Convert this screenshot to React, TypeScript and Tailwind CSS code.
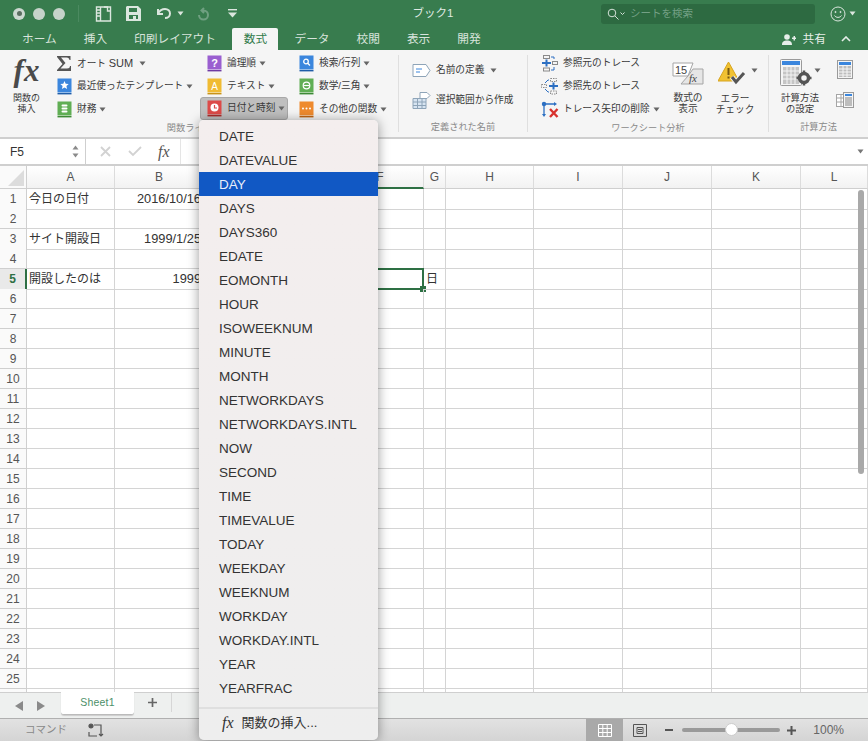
import type { ReactNode } from "react";

const tabs = ["ホーム", "挿入", "印刷レイアウト", "数式", "データ", "校閲", "表示", "開発"];

const menuItems = [
  "DATE", "DATEVALUE", "DAY", "DAYS", "DAYS360", "EDATE", "EOMONTH", "HOUR", "ISOWEEKNUM", "MINUTE",
  "MONTH", "NETWORKDAYS", "NETWORKDAYS.INTL", "NOW", "SECOND", "TIME", "TIMEVALUE", "TODAY", "WEEKDAY",
  "WEEKNUM", "WORKDAY", "WORKDAY.INTL", "YEAR", "YEARFRAC",
];

const columns = ["A", "B", "C", "D", "E", "F", "G", "H", "I", "J", "K", "L"];
const rows = Array.from({ length: 26 }, (_, i) => i + 1);
const gridCols = "grid grid-cols-[27px_88px_89px_44px_44px_45px_87px_22px_88px_89px_89px_89px_67px]";

const cells: Record<string, { text: string; right?: boolean }> = {
  A1: { text: "今日の日付" },
  B1: { text: "2016/10/16", right: true },
  A3: { text: "サイト開設日" },
  B3: { text: "1999/1/25", right: true },
  A5: { text: "開設したのは" },
  B5: { text: "1999", right: true },
  G5: { text: "日" },
};

const Caret = ({ className = "" }: { className?: string }) => (
  <svg width="7" height="5" viewBox="0 0 7 5" className={className}>
    <path d="M0.5 0.5h6L3.5 4.5z" fill="currentColor" />
  </svg>
);

const BookIcon = ({ color, line, children }: { color: string; line: string; children: ReactNode }) => (
  <svg width="15" height="17" viewBox="0 0 15 17" className="shrink-0">
    <rect x="0.5" y="0.5" width="14" height="14" fill={color} />
    <rect x="0.5" y="15" width="14" height="1.4" fill={line} />
    {children}
  </svg>
);

const FxText = ({ className }: { className: string }) => (
  <span className={`font-['Liberation_Serif',serif] italic ${className}`}>fx</span>
);

const RibbonItem = ({ icon, label, caret = true, width }: { icon: ReactNode; label: ReactNode; caret?: boolean; width?: string }) => (
  <div className={`flex h-[23px] items-center ${width ?? ""}`}>
    <div className="flex w-[20px] shrink-0 items-center">{icon}</div>
    <span className="whitespace-nowrap text-[9.7px] text-[#3a3a3a]">{label}</span>
    {caret && <Caret className="ml-[3px] text-[#666]" />}
  </div>
);

const GroupLabel = ({ children }: { children: ReactNode }) => (
  <div className="mt-auto pb-[3px] text-center text-[9.2px] leading-[14px] text-[#8a8a8a]">{children}</div>
);

const GroupDivider = () => <div className="mb-[5px] mt-[3px] w-px shrink-0 bg-[#dfdfdf]" />;

const TitleBar = () => (
  <div className="flex h-[27px] shrink-0 items-center bg-[#387c4e] pl-[13px] text-[#cfdcd3]">
    <div className="flex items-center gap-[8px]">
      <div className="flex h-[12px] w-[12px] items-center justify-center rounded-full bg-[#cdd8d1]">
        <div className="h-[5px] w-[5px] rounded-full bg-[#5b6d61]" />
      </div>
      <div className="h-[12px] w-[12px] rounded-full bg-[#c6d3ca]" />
      <div className="h-[12px] w-[12px] rounded-full bg-[#c6d3ca]" />
    </div>
    <div className="ml-[13px] h-[17px] w-px bg-[#4b8a60]" />
    <svg width="17" height="16" viewBox="0 0 17 16" className="ml-[16px]" fill="none" stroke="#dbe6de" strokeWidth="1.4">
      <path d="M1.5 1h14v14h-14z" />
      <path d="M5.5 1v14M1.5 4h4M1.5 7h4M1.5 10h4M9 1h3.5v4h3" />
    </svg>
    <svg width="15" height="15" viewBox="0 0 15 15" className="ml-[14px]" fill="#dbe6de">
      <path d="M1 0h11l3 3v12H0V1zM3 2v4h8V2zM3 9v4h9V9z" fillRule="evenodd" />
      <rect x="7" y="10" width="3" height="3" />
    </svg>
    <svg width="16" height="13" viewBox="0 0 16 13" className="ml-[15px]" fill="none" stroke="#dbe6de" strokeWidth="2">
      <path d="M2 2v5h5M2 6.5C4 3 6.5 2 9 2c3 0 5 2 5 4.5S12 11 9 11" />
    </svg>
    <Caret className="ml-[5px] text-[#dbe6de]" />
    <svg width="12" height="14" viewBox="0 0 12 14" className="ml-[13px]" fill="none" stroke="#6fa081" strokeWidth="2">
      <path d="M7 1 4.500 3.500 7 6M5 3.500h1.500a4.500 4.500 0 1 1-4.500 4.500" />
    </svg>
    <svg width="9" height="9" viewBox="0 0 9 9" className="ml-[19px]" fill="#dbe6de">
      <rect x="0" y="0" width="9" height="1.4" />
      <path d="M0 3.5h9L4.500 8.500z" />
    </svg>
    <div className="ml-[171px] w-[50px] text-center text-[11.5px] text-[#dfe9e2]">ブック1</div>
    <div className="ml-[143px] flex h-[20px] w-[214px] items-center rounded-[3px] bg-[#2d6a41] pl-[6px]">
      <svg width="12" height="12" viewBox="0 0 12 12" fill="none" stroke="#d5e2d9" strokeWidth="1">
        <circle cx="5" cy="5" r="3.8" />
        <path d="m8 8 3.5 3.5" />
      </svg>
      <svg width="5" height="4" viewBox="0 0 5 4" className="ml-[1px]" fill="none" stroke="#d5e2d9">
        <path d="m0.5 0.5 2 2 2-2" />
      </svg>
      <span className="ml-[5px] text-[10.5px] text-[#74a085]">シートを検索</span>
    </div>
    <svg width="16" height="16" viewBox="0 0 16 16" className="ml-[15px]" fill="none" stroke="#dbe6de" strokeWidth="1">
      <circle cx="8" cy="8" r="7" />
      <circle cx="5.5" cy="6" r="0.6" fill="#dbe6de" />
      <circle cx="10.5" cy="6" r="0.6" fill="#dbe6de" />
      <path d="M4.5 9.5c1.5 2.5 5.5 2.5 7 0" />
    </svg>
    <Caret className="ml-[3px] text-[#dbe6de]" />
  </div>
);

const TabBar = () => (
  <div className="flex h-[23px] shrink-0 items-end bg-[#387c4e] pl-[8.5px] text-[11.7px] text-[#d8e4dc]">
    {tabs.map((tab) =>
      tab === "数式" ? (
        <div key={tab} className="ml-[3px] mr-[2.5px] flex h-[22px] w-[46px] items-center justify-center rounded-t-[2px] bg-[#f5f5f5] text-[#2f7a49]">
          {tab}
        </div>
      ) : (
        <div key={tab} className="flex h-[22px] items-center whitespace-nowrap px-[13.5px]">
          {tab}
        </div>
      ),
    )}
    <div className="ml-auto flex h-[22px] items-center pr-[17px]">
      <svg width="14" height="11" viewBox="0 0 14 11" fill="#e6eee9">
        <circle cx="5" cy="3" r="2.8" />
        <path d="M0 11c0-3.5 2-4.5 5-4.5s5 1 5 4.500zM10 3.500h1.500V2H13v1.500h1V5h-1v1.500h-1.500V5H10z" />
      </svg>
      <span className="ml-[7px] text-[#e6eee9]">共有</span>
      <svg width="10" height="6" viewBox="0 0 10 6" className="ml-[15px]" fill="none" stroke="#e6eee9" strokeWidth="1.6">
        <path d="m1 5 4-4 4 4" />
      </svg>
    </div>
  </div>
);

const Ribbon = () => (
  <div className="flex h-[87px] shrink-0 bg-[#f5f5f5] pt-[2px]">
    <div className="flex w-[398px] flex-col">
      <div className="flex">
        <div className="flex w-[53px] flex-col items-center">
          <FxText className="text-[31px] font-bold leading-[38px] text-[#4a4a4a]" />
          <div className="mt-[3px] text-center text-[9px] leading-[11px] text-[#3a3a3a]">
            関数の
            <br />
            挿入
          </div>
        </div>
        <div className="ml-[4px] flex w-[150px] flex-col">
          <RibbonItem
            label={
              <span className="mr-[3px]">
                オート <span className="text-[11px]">SUM</span>
              </span>
            }
            icon={
              <svg width="14" height="15" viewBox="0 0 14 15" fill="#555">
                <path d="M0 0h13.500v4h-1c-.3-1.600-1-2.500-3-2.500H4L8.500 7 3.500 12.500H10c2 0 2.800-.8 3-2.500h1v5H0v-1L5.500 8 0 1z" />
              </svg>
            }
          />
          <RibbonItem
            label="最近使ったテンプレート"
            icon={
              <BookIcon color="#3b86dd" line="#1f5da8">
                <path d="m7.500 3 1.200 2.800 3 .2-2.300 2 .7 3-2.600-1.600L4.900 11l.7-3-2.300-2 3-.2z" fill="#fff" />
              </BookIcon>
            }
          />
          <RibbonItem
            label="財務"
            icon={
              <BookIcon color="#60ae54" line="#3d8a35">
                <rect x="4.500" y="3.500" width="6" height="2" rx="1" fill="#fff" />
                <rect x="4.500" y="6.500" width="6" height="2" rx="1" fill="#fff" />
                <rect x="4.500" y="9.500" width="6" height="2" rx="1" fill="#fff" />
              </BookIcon>
            }
          />
        </div>
        <div className="flex w-[92px] flex-col">
          <RibbonItem
            label="論理順"
            icon={
              <BookIcon color="#9a5fd0" line="#6e3ba3">
                <text x="7.500" y="11.500" textAnchor="middle" fontSize="11" fontWeight="700" fill="#fff">?</text>
              </BookIcon>
            }
          />
          <RibbonItem
            label="テキスト"
            icon={
              <BookIcon color="#f0bb33" line="#c99317">
                <text x="7.500" y="11.500" textAnchor="middle" fontSize="10" fill="#fff">A</text>
              </BookIcon>
            }
          />
          <div className="-ml-[7px] -mt-px w-[88px] rounded-[3px] border border-[#a8a8a8] bg-[#bfbfbf] pl-[6px]">
            <div className="-my-px">
              <RibbonItem
                label="日付と時刻"
                icon={
                  <BookIcon color="#dc4a48" line="#a82b2a">
                    <circle cx="7.500" cy="7.500" r="4" fill="#fff" />
                    <path d="M7.500 5v3h2.500" fill="none" stroke="#dc4a48" strokeWidth="1.200" />
                  </BookIcon>
                }
              />
            </div>
          </div>
        </div>
        <div className="flex flex-col">
          <RibbonItem
            label="検索/行列"
            icon={
              <BookIcon color="#3b86dd" line="#1f5da8">
                <circle cx="7" cy="6.500" r="2.300" fill="none" stroke="#fff" strokeWidth="1.300" />
                <path d="m8.700 8.200 2.300 2.300" stroke="#fff" strokeWidth="1.300" />
              </BookIcon>
            }
          />
          <RibbonItem
            label="数学/三角"
            icon={
              <BookIcon color="#60ae54" line="#3d8a35">
                <circle cx="7.500" cy="7.500" r="3.300" fill="none" stroke="#fff" strokeWidth="1.200" />
                <path d="M4.500 7.500h6" stroke="#fff" strokeWidth="1.200" />
              </BookIcon>
            }
          />
          <RibbonItem
            label="その他の関数"
            icon={
              <BookIcon color="#ee8a2e" line="#bf6412">
                <circle cx="4" cy="7.500" r="1" fill="#fff" />
                <circle cx="7.500" cy="7.500" r="1" fill="#fff" />
                <circle cx="11" cy="7.500" r="1" fill="#fff" />
              </BookIcon>
            }
          />
        </div>
      </div>
      <GroupLabel>関数ライブラリ</GroupLabel>
    </div>
    <GroupDivider />

    <div className="flex w-[128px] flex-col">
      <div className="ml-[13px] mt-[7px] flex h-[23px] items-center">
        <svg width="19" height="13" viewBox="0 0 19 13" className="mr-[5px]" fill="#fff" stroke="#8ea4b8">
          <path d="M1 .5h13l4 6-4 6H1z" />
          <path d="M4 5h6M4 8h4" stroke="#3b86dd" />
        </svg>
        <span className="text-[9.7px] text-[#3a3a3a]">名前の定義</span>
        <Caret className="ml-[6px] text-[#666]" />
      </div>
      <div className="ml-[13px] mt-[7px] flex h-[23px] items-center">
        <svg width="19" height="18" viewBox="0 0 19 18" className="mr-[5px]" fill="#d7e4f1" stroke="#8ea4b8">
          <path d="M1 6.500h13v10H1zM1 10h13M1 13.500h13M5.500 6.500v10M10 6.500v10" />
          <path d="M8 .5h7l3 3-3 3H8z" fill="#fff" />
        </svg>
        <span className="whitespace-nowrap text-[9.7px] text-[#3a3a3a]">選択範囲から作成</span>
      </div>
      <GroupLabel>定義された名前</GroupLabel>
    </div>
    <GroupDivider />

    <div className="flex w-[240px] flex-col">
      <div className="flex">
        <div className="ml-[13px] flex w-[124px] flex-col">
          <RibbonItem
            label="参照元のトレース"
            caret={false}
            width="[&>div]:w-[22px]"
            icon={
              <svg width="17" height="17" viewBox="0 0 17 17" fill="none" stroke="#8a8a8a">
                <rect x="2.500" y="0.500" width="6" height="3" />
                <rect x="2.500" y="13" width="6" height="3" />
                <rect x="11.500" y="6.500" width="5" height="3" />
                <path d="M1 8h9M5.500 4.500v7" stroke="#2c6fc2" strokeWidth="2" />
                <path d="M10 2h3v2M10 15h3v-3" stroke="#2c6fc2" />
              </svg>
            }
          />
          <RibbonItem
            label="参照先のトレース"
            caret={false}
            width="[&>div]:w-[22px]"
            icon={
              <svg width="17" height="17" viewBox="0 0 17 17" fill="none" stroke="#8a8a8a">
                <rect x="9.500" y="0.500" width="6" height="3" strokeDasharray="1.500 1" />
                <rect x="9.500" y="13" width="6" height="3" strokeDasharray="1.500 1" />
                <rect x="0.500" y="6.500" width="5" height="3" strokeDasharray="1.500 1" />
                <path d="M8 8h9M12.500 4.500v7" stroke="#2c6fc2" strokeWidth="2" />
                <path d="M4 5l3-3h1M4 11l3 3h1" stroke="#2c6fc2" />
              </svg>
            }
          />
          <RibbonItem
            label="トレース矢印の削除"
            width="[&>div]:w-[22px]"
            icon={
              <svg width="18" height="17" viewBox="0 0 18 17" fill="none">
                <path d="M3 3v11M3 3h11" stroke="#2c6fc2" strokeWidth="1.300" />
                <circle cx="3" cy="3" r="2.200" fill="#2c6fc2" />
                <path d="M1 13l2 3 2-3zM13 1l3 2-3 2z" fill="#2c6fc2" />
                <path d="m9 8 7.500 8m0-8L9 16" stroke="#d8322e" strokeWidth="2.400" />
              </svg>
            }
          />
        </div>
        <div className="flex w-[46px] flex-col items-center">
          <svg width="32" height="24" viewBox="0 0 32 24" className="mt-[10px]">
            <path d="M1 1h20l-5 13H1z" fill="#fff" stroke="#a5a5a5" />
            <path d="M21 7h10v15H9l7-8z" fill="#e6e6e6" stroke="#a5a5a5" />
            <text x="3" y="11.500" fontSize="11" fill="#444">15</text>
            <text x="17" y="20" fontSize="11" fontStyle="italic" fontFamily="Liberation Serif" fill="#444">fx</text>
          </svg>
          <div className="mt-[6px] text-center text-[9.700px] leading-[11px] text-[#3a3a3a]">
            数式の
            <br />
            表示
          </div>
        </div>
        <div className="flex w-[48px] flex-col items-center">
          <div className="mt-[9px] flex items-center pl-[6px]">
            <svg width="28" height="24" viewBox="0 0 28 24">
              <path d="M10.500 1 21 20H0z" fill="#f1c232" stroke="#d7a41e" strokeLinejoin="round" />
              <path d="M9.500 7h2v7h-2zM9.500 15.500h2v2h-2z" fill="#7a5a10" />
              <path d="m14 16 4 5 8-9" fill="none" stroke="#f5f5f5" strokeWidth="5" />
              <path d="m14 16 4 5 8-9" fill="none" stroke="#555" strokeWidth="3" />
            </svg>
            <Caret className="ml-[5px] mb-[6px] text-[#666]" />
          </div>
          <div className="mt-[8px] text-center text-[9.700px] leading-[11px] text-[#3a3a3a]">
            エラー
            <br />
            チェック
          </div>
        </div>
      </div>
      <GroupLabel>ワークシート分析</GroupLabel>
    </div>
    <GroupDivider />

    <div className="flex flex-1 flex-col">
      <div className="flex">
        <div className="flex w-[62px] flex-col items-center">
          <div className="mt-[7px] flex items-center">
            <svg width="33" height="28" viewBox="0 0 33 28">
              <rect x="0.500" y="0.500" width="21" height="26" rx="1" fill="#f5f5f5" stroke="#9a9a9a" />
              <rect x="2" y="2" width="18" height="4" fill="#3b86dd" />
              <path d="M3 8h16v17H3z" fill="#c5c5c5" />
              <path d="M3 12h16M3 16h16M3 20h16M7 8v17M11 8v17M15 8v17" stroke="#f5f5f5" />
              <circle cx="24" cy="19" r="4.500" fill="#f5f5f5" stroke="#555" strokeWidth="3.500" />
              <path d="M24 11.500v3M24 23.500v3M16.500 19h3M28.500 19h3" stroke="#555" strokeWidth="2.500" />
            </svg>
            <Caret className="ml-px mb-[6px] text-[#666]" />
          </div>
          <div className="mt-[5px] text-center text-[9.500px] leading-[11px] text-[#3a3a3a]">
            計算方法
            <br />
            の設定
          </div>
        </div>
        <div className="flex flex-col items-center pl-[5px]">
          <svg width="17" height="19" viewBox="0 0 17 19" className="mt-[8px]">
            <rect x="0.500" y="0.500" width="15" height="18" fill="#f5f5f5" stroke="#9a9a9a" />
            <rect x="2" y="2" width="12" height="3" fill="#3b86dd" />
            <path d="M2 6h12v11H2z" fill="#bdbdbd" />
            <path d="M2 9h12M2 12h12M2 15h12M6 6v11M10 6v11" stroke="#f5f5f5" />
          </svg>
          <svg width="18" height="17" viewBox="0 0 18 17" className="mt-[13px]">
            <rect x="0.500" y="2.500" width="10" height="12" fill="#fff" stroke="#a5a5a5" />
            <path d="M1 6h9M1 10h9M5 3v11" stroke="#a5a5a5" />
            <rect x="7.500" y="0.500" width="10" height="15" fill="#f5f5f5" stroke="#9a9a9a" />
            <rect x="9" y="2" width="7" height="2" fill="#3b86dd" />
            <path d="M9 5h7v9H9z" fill="#bdbdbd" />
          </svg>
        </div>
      </div>
      <GroupLabel>計算方法</GroupLabel>
    </div>
  </div>
);

const FormulaBar = () => (
  <div className="flex h-[29px] shrink-0 border-y-2 border-[#cfcfcf] bg-white">
    <div className="flex w-[86px] items-center border-r border-[#cfcfcf] pl-[10px] text-[12px] text-[#333]">
      F5
      <div className="ml-auto mr-[6px] flex flex-col gap-[3px] text-[#8a8a8a]">
        <Caret className="rotate-180" />
        <Caret />
      </div>
    </div>
    <div className="flex w-[95px] items-center border-r border-[#e5e5e5] pl-[14px]">
      <svg width="11" height="11" viewBox="0 0 11 11" stroke="#d2d2d2" strokeWidth="1.800">
        <path d="m1 1 9 9m0-9-9 9" />
      </svg>
      <svg width="14" height="11" viewBox="0 0 14 11" className="ml-[17px]" fill="none" stroke="#d2d2d2" strokeWidth="1.800">
        <path d="m1 5 4 4 8-8" />
      </svg>
      <FxText className="ml-[16px] text-[16px] leading-[20px] text-[#555]" />
    </div>
    <div className="ml-auto flex items-center pr-[4px] text-[#777]">
      <Caret />
    </div>
  </div>
);

const SheetGrid = () => (
  <div className="relative min-h-0 flex-1 overflow-hidden bg-white text-[12px] text-[#333]">
    <div className={`${gridCols} h-[23px]`}>
      <div className="relative border-r border-b border-[#cfcfcf] bg-[#fafafa]">
        <svg width="16" height="16" viewBox="0 0 16 16" className="absolute bottom-[2px] right-[2px]">
          <path d="M16 0v16H0z" fill="#dcdcdc" />
        </svg>
      </div>
      {columns.map((col) => (
        <div
          key={col}
          className={`flex items-center justify-center border-r border-[#dcdcdc] bg-gradient-to-b from-white to-[#f2f2f2] text-[#555] ${
            col === "F" ? "border-b-2 border-b-[#2e7044]" : "border-b border-b-[#cfcfcf]"
          }`}
        >
          {col}
        </div>
      ))}
    </div>
    {rows.map((row) => (
      <div key={row} className={`${gridCols} h-[20px]`}>
        <div
          className={`flex items-center justify-center border-r border-b border-[#cfcfcf] ${
            row === 5 ? "border-r-2 border-r-[#2e7044] bg-[#e9e9e9] font-bold text-[#2e7044]" : "bg-[#fafafa] text-[#555]"
          }`}
        >
          {row <= 25 ? row : ""}
        </div>
        {columns.map((col) => {
          const cell = cells[`${col}${row}`];
          const selected = col === "F" && row === 5;
          return (
            <div
              key={col}
              className={`relative whitespace-nowrap border-r border-b border-[#d4d4d4] px-[2px] leading-[20px] ${
                cell?.right ? "flex justify-end text-[12.800px]" : ""
              }`}
            >
              {cell?.text}
              {selected && (
                <>
                  <div className="absolute -top-px -bottom-px -left-px -right-px border-2 border-[#2e7044]" />
                  <div className="absolute -bottom-[3px] -right-[3px] h-[6px] w-[6px] bg-[#2e7044]" />
                </>
              )}
            </div>
          );
        })}
      </div>
    ))}
    <div className="absolute right-[4px] top-[24px] h-[284px] w-[6px] rounded-full bg-[#a9a9a9]" />
  </div>
);

const SheetTabs = () => (
  <div className="flex h-[26px] shrink-0 border-t border-[#cfcfcf] bg-[#eef0ef]">
    <div className="flex w-[61px] items-center pl-[15px] text-[#8a8a8a]">
      <svg width="8" height="10" viewBox="0 0 8 10" fill="currentColor">
        <path d="M8 0v10L0 5z" />
      </svg>
      <svg width="8" height="10" viewBox="0 0 8 10" className="ml-[14px]" fill="currentColor">
        <path d="M0 0v10l8-5z" />
      </svg>
    </div>
    <div className="-mt-px mb-[3px] flex w-[73px] items-center justify-center rounded-b-[3px] border-b border-[#bbb] bg-white text-[10.5px] tracking-[0.2px] text-[#4c9069] shadow-[0_1px_1px_#ccc]">
      Sheet1
    </div>
    <div className="mb-[6px] flex w-[38px] items-center justify-center border-r border-[#d6d6d6]">
      <svg width="11" height="11" viewBox="0 0 11 11" stroke="#666" strokeWidth="1.700">
        <path d="M5.500 1v9M1 5.500h9" />
      </svg>
    </div>
  </div>
);

const StatusBar = () => (
  <div className="flex h-[23px] shrink-0 items-center border-t border-[#b0b0b0] bg-gradient-to-b from-[#e2e2e2] to-[#d4d4d4] pl-[25px] text-[#888]">
    <span className="text-[10.5px]">コマンド</span>
    <svg width="16" height="15" viewBox="0 0 16 15" className="ml-[21px]" fill="none" stroke="#555" strokeWidth="1.200">
      <circle cx="3" cy="3" r="2" fill="#555" />
      <path d="M6 2h7v11M1 9v4h8M11 11l2 2 2-2" />
    </svg>
    <div className="ml-auto flex h-full items-center">
      <div className="flex h-full w-[37px] items-center justify-center bg-[#a9a9a9]">
        <svg width="14" height="13" viewBox="0 0 14 13" stroke="#fff" fill="none">
          <path d="M.5.500h13v12H.5zM.5 4.500h13M.5 8.500h13M4.800.5v12M9.200.5v12" />
        </svg>
      </div>
      <svg width="14" height="13" viewBox="0 0 14 13" className="ml-[10px]" stroke="#555" fill="none">
        <path d="M.5.500h13v12H.5zM4 3.500h6v6H4zM5 5.500h4M5 7.500h4" />
      </svg>
      <div className="ml-[18px] h-[2px] w-[8px] bg-[#555]" />
      <div className="relative ml-[9px] h-[4px] w-[98px] rounded-full bg-[#9a9a9a]">
        <div className="absolute -top-[5px] left-[43px] h-[13px] w-[13px] rounded-full border border-[#ccc] bg-white" />
      </div>
      <svg width="9" height="9" viewBox="0 0 9 9" className="ml-[7px]" stroke="#555" strokeWidth="2">
        <path d="M4.500 0v9M0 4.500h9" />
      </svg>
      <span className="ml-[17px] mr-[24px] text-[12px] text-[#666]">100%</span>
    </div>
  </div>
);

const FunctionMenu = () => (
  <div className="absolute left-[199px] top-[120px] w-[179px] rounded-[5px] bg-gradient-to-b from-[#f4eeee] to-[#eeeeee] pt-[4px] text-[13.5px] text-[#333] shadow-[0_1px_12px_rgba(0,0,0,0.4)]">
    {menuItems.map((item) => (
      <div
        key={item}
        className={`flex h-[24px] items-center pl-[20px] pt-[2px] ${item === "DAY" ? "bg-[#1158c4] text-[#e8eefa]" : ""}`}
      >
        {item}
      </div>
    ))}
    <div className="mt-[7px] border-t-2 border-[#dfdfdf] pb-[4px] pt-[1px]">
      <div className="flex h-[26px] items-center pl-[23px]">
        <FxText className="text-[16px]" />
        <span className="ml-[8px] text-[13px]">関数の挿入...</span>
      </div>
    </div>
  </div>
);

export default function App() {
  return (
    <div className="relative flex h-[741px] w-[868px] flex-col overflow-hidden font-['Liberation_Sans','Noto_Sans_CJK_JP',sans-serif]">
      <TitleBar />
      <TabBar />
      <Ribbon />
      <FormulaBar />
      <SheetGrid />
      <SheetTabs />
      <StatusBar />
      <FunctionMenu />
    </div>
  );
}
